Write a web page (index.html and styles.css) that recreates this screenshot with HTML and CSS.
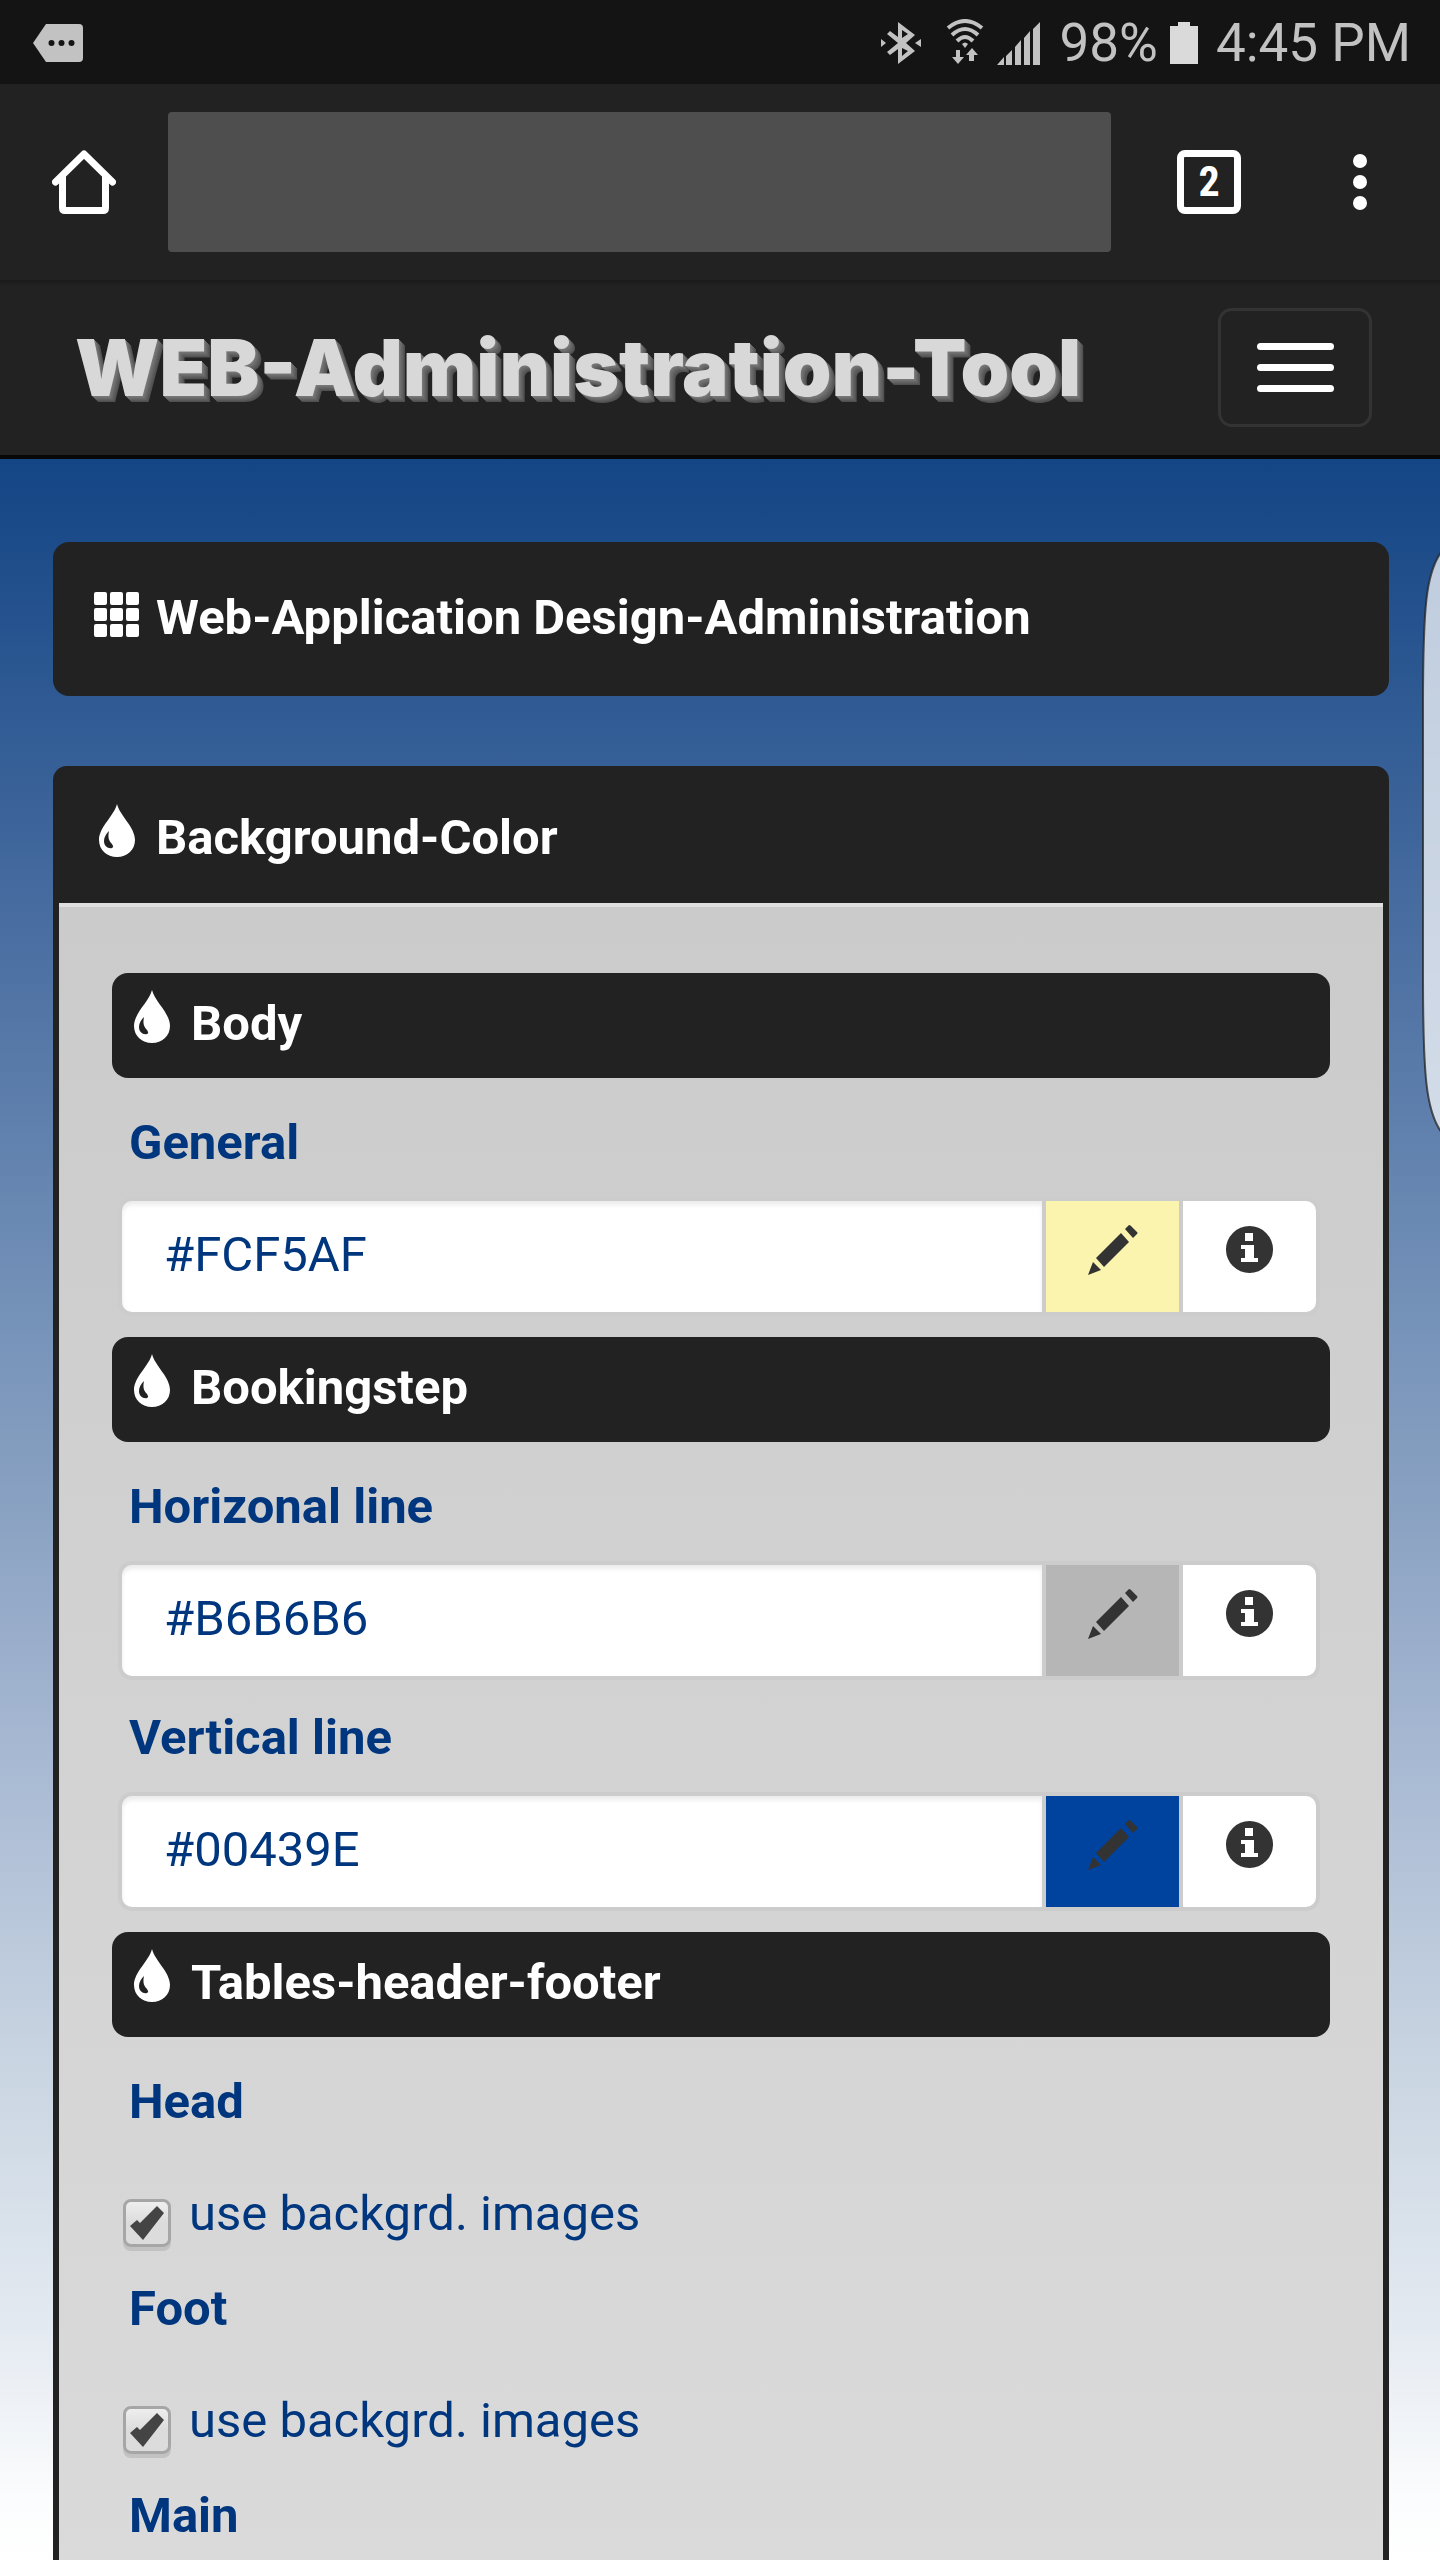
FILE: index.html
```html
<!DOCTYPE html>
<html lang="en">
<head>
<meta charset="utf-8">
<meta name="viewport" content="width=device-width, initial-scale=1">
<title>WEB-Administration-Tool</title>
<link rel="stylesheet" href="styles.css">
</head>
<body>
<svg class="sprite" aria-hidden="true">
  <symbol id="drop" viewBox="0 0 36 53"><path fill-rule="evenodd" d="M18 0C21 12 36 23 36 36C36 46 28 53 18 53C8 53 0 46 0 36C0 23 15 12 18 0ZM10 27C7 30 5 33 5 37C5 42 9 45 13 44C15 43 14 42 13 40C9 36 9 32 10 27Z"/></symbol>
  <symbol id="pencil" viewBox="0 0 50 50"><path d="M0 50L5 37L13 45ZM8 33L33 8L41 17L16 42ZM37 4L41 0Q42 0 43 1L49 7Q50 8 49 9L45 13Z"/></symbol>
  <symbol id="info" viewBox="0 0 47 47"><path fill-rule="evenodd" d="M23.500 0A23.500 23.500 0 1 1 23.500 47A23.500 23.500 0 1 1 23.500 0ZM19 7V15H27V7ZM15 19V23H19V32H15V36H32V32H28V19Z"/></symbol>
</svg>

<header class="status">
  <svg class="notice" width="50" height="38" viewBox="0 0 50 38"><path fill="#c2c2c2" d="M13 0H46Q50 0 50 4V34Q50 38 46 38H13L0 19Z"/><g fill="#141414"><circle cx="18.500" cy="19" r="3"/><circle cx="28.500" cy="19" r="3"/><circle cx="38.500" cy="19" r="3"/></g></svg>
  <svg class="bt" width="40" height="42" viewBox="0 0 40 42" fill="#c2c2c2"><path fill-rule="evenodd" d="M17 0L34 13L25 21L34 29L17 42V27L9 33L6 30L17 21L6 12L9 9L17 15ZM21 8V16L27 12ZM21 26V34L27 29ZM0 17L5 21L0 25ZM40 17L34 21L40 25Z"/></svg>
  <svg class="wifi" width="38" height="45" viewBox="0 0 38 45"><g fill="none" stroke="#c2c2c2" stroke-width="4"><path d="M2 9Q19 -5 36 9"/><path d="M6 16Q19 4 32 16"/><path d="M11 22Q19 14 27 22"/></g><path fill="#c2c2c2" d="M16 25Q19 22 22 25L19 29ZM10 31H14V38H18L12 45L6 38H10ZM26 29L32 36H28V42H23V36H20Z"/></svg>
  <svg class="signal" width="43" height="43" viewBox="0 0 43 43" fill="#c2c2c2"><path d="M0 43L7 35V43ZM9 43V34L15 28V43ZM18 43V25L24 18V43ZM27 43V16L33 9V43ZM36 43V7L43 0V43Z"/></svg>
  <span class="percent">98%</span>
  <svg class="battery" width="28" height="42" viewBox="0 0 28 42"><path fill="#dadada" d="M8 0H20V4H28V42H0V4H8Z"/></svg>
  <time class="clock">4:45 PM</time>
</header>

<div class="browser">
  <button class="tool home" aria-label="Home"><svg width="64" height="64" viewBox="0 0 64 64" fill="none" stroke="#fff" stroke-width="7" stroke-linecap="round"><path d="M3.500 32L32 4L60.500 32" stroke-linejoin="round"/><path d="M10.500 27V58Q10.500 60.500 13 60.500H51Q53.500 60.500 53.500 58V27"/></svg></button>
  <input class="address" type="text" aria-label="Address">
  <button class="tool tabs" aria-label="Open tabs">2</button>
  <button class="tool more" aria-label="More"><svg width="14" height="56" viewBox="0 0 14 56" fill="#fff"><circle cx="7" cy="7" r="7"/><circle cx="7" cy="28" r="7"/><circle cx="7" cy="49" r="7"/></svg></button>
</div>

<nav class="navbar">
  <a class="brand" href="#">WEB-Administration-Tool</a>
  <button class="toggle" aria-label="Menu"><span></span><span></span><span></span></button>
</nav>

<main class="page">
  <h1 class="title bar"><svg class="grid" width="45" height="45" viewBox="0 0 45 45" fill="#fff"><g id="r"><rect width="13" height="13" rx="2"/><rect x="16" width="13" height="13" rx="2"/><rect x="32" width="13" height="13" rx="2"/></g><use href="#r" y="16"/><use href="#r" y="32"/></svg>Web-Application Design-Administration</h1>

  <section class="panel">
    <h2 class="heading bar"><svg class="drop"><use href="#drop"/></svg>Background-Color</h2>
    <div class="content">
      <h3 class="sub bar"><svg class="drop"><use href="#drop"/></svg>Body</h3>
      <div class="field">
        <label for="general">General</label>
        <div class="group">
          <input id="general" type="text" value="#FCF5AF">
          <button class="pick yellow" aria-label="Pick colour"><svg width="50" height="50"><use href="#pencil"/></svg></button>
          <button class="pick last" aria-label="Info"><svg width="47" height="47"><use href="#info"/></svg></button>
        </div>
      </div>

      <h3 class="sub bar"><svg class="drop"><use href="#drop"/></svg>Bookingstep</h3>
      <div class="field">
        <label for="horizontal">Horizonal line</label>
        <div class="group">
          <input id="horizontal" type="text" value="#B6B6B6">
          <button class="pick grey" aria-label="Pick colour"><svg width="50" height="50"><use href="#pencil"/></svg></button>
          <button class="pick last" aria-label="Info"><svg width="47" height="47"><use href="#info"/></svg></button>
        </div>
      </div>
      <div class="field">
        <label for="vertical">Vertical line</label>
        <div class="group">
          <input id="vertical" type="text" value="#00439E">
          <button class="pick blue" aria-label="Pick colour"><svg width="50" height="50"><use href="#pencil"/></svg></button>
          <button class="pick last" aria-label="Info"><svg width="47" height="47"><use href="#info"/></svg></button>
        </div>
      </div>

      <h3 class="sub bar"><svg class="drop"><use href="#drop"/></svg>Tables-header-footer</h3>
      <div class="option">
        <h4>Head</h4>
        <label class="check"><input type="checkbox" checked>use backgrd. images</label>
      </div>
      <div class="option">
        <h4>Foot</h4>
        <label class="check"><input type="checkbox" checked>use backgrd. images</label>
      </div>
      <div class="option">
        <h4>Main</h4>
      </div>
    </div>
  </section>
</main>

<svg class="edge" width="18" height="592" viewBox="0 0 18 592" aria-hidden="true"><path d="M20 5C4 26 1 60 1 160V430C1 530 4 566 20 587Z" fill="#fff" fill-opacity=".72" stroke="#222" stroke-opacity=".75" stroke-width="2"/></svg>
</body>
</html>
```
FILE: styles.css
```css
* { box-sizing: border-box; }

body {
  margin: 0;
  min-height: 100vh;
  display: flex;
  flex-direction: column;
  position: relative;
  overflow-x: hidden;
  background: #222;
  font-family: Roboto, "Liberation Sans", sans-serif;
  font-size: 49px;
  line-height: 56px;
}

button, input { font: inherit; margin: 0; }
button { padding: 0; border: 0; background: none; }
h1, h2, h3, h4 { margin: 0; font-size: 49px; font-weight: 700; }
svg { flex: none; }
.sprite { position: absolute; width: 0; height: 0; }

/* Phone status bar */
.status {
  display: flex;
  align-items: center;
  height: 84px;
  padding: 2px 29px 0 33px;
  background: #141414;
  color: #c2c2c2;
  font-size: 53px;
}
.bt { margin-left: auto; margin-right: 25px; }
.wifi { margin-right: 13px; margin-bottom: 3px; }
.signal { margin-right: 20px; }
.battery { margin: 0 18px 0 12px; }

/* Browser toolbar */
.browser {
  display: flex;
  align-items: center;
  height: 196px;
  padding: 0 73px 0 52px;
}
.tool { flex: none; display: flex; align-items: center; justify-content: center; color: #fff; }
.address {
  flex: 1;
  min-width: 0;
  height: 140px;
  margin: 0 66px 0 52px;
  border: 0;
  border-radius: 4px;
  background: #4e4e4e;
}
.tabs {
  width: 64px;
  height: 64px;
  margin-right: 112px;
  border: 7px solid #fff;
  border-radius: 8px;
  font-family: "Roboto Condensed", Roboto, sans-serif;
  font-size: 42px;
  font-weight: 700;
}

/* Site navigation */
.navbar {
  display: flex;
  align-items: center;
  justify-content: space-between;
  height: 179px;
  padding: 0 68px 0 75px;
  border-bottom: 4px solid #080808;
  background: linear-gradient(#1a1a1a, #222 6px);
}
.brand {
  color: #d8d8d8;
  font-family: Inter, "Liberation Sans", sans-serif;
  font-size: 78px;
  font-weight: 900;
  text-decoration: none;
  white-space: nowrap;
  text-shadow: 1px 1px #777, 2px 2px #707070, 3px 3px #686868, 4px 4px #606060, 5px 5px #585858, 6px 6px #505050;
}
.toggle {
  display: flex;
  flex-direction: column;
  align-items: center;
  justify-content: center;
  gap: 14px;
  width: 154px;
  height: 119px;
  border: 3px solid #333;
  border-radius: 14px;
}
.toggle span { width: 77px; height: 7px; border-radius: 4px; background: #fff; }

/* Page */
.page {
  flex: 1;
  display: flex;
  flex-direction: column;
  gap: 70px;
  padding: 83px 51px 0 53px;
  background: linear-gradient(#144585 0, #1a4a88 3%, #4b6fa2 23%, #7a96bb 43%, #8aa2c2 50%, #a8b9d3 62%, #c8d4e1 76%, #e4eaf1 89%, #fbfcfd 97%, #fff);
}
.bar {
  display: flex;
  align-items: center;
  gap: 15px;
  background: #222;
  color: #fff;
}
.title { padding: 48px 40px 50px; border-radius: 16px; }
.grid { margin: 0 2px 7px 1px; }
.drop { width: 36px; height: 53px; margin: 0 6px 14px; fill: #fff; }

.panel {
  flex: 1;
  display: flex;
  flex-direction: column;
  border: solid #222;
  border-width: 0 6px;
  border-radius: 14px 14px 0 0;
  background: #222;
}
.heading { padding: 38px 34px 32px; border-radius: 14px 14px 0 0; }
.content {
  flex: 1;
  padding: 66px 53px 17px;
  border-top: 4px solid #dfdfdf;
  background: linear-gradient(#cbcbcb, #dadada);
}
.sub { padding: 17px 16px 21px; border-radius: 16px; margin-bottom: 37px; }

.field { margin: 0 10px 21px 6px; color: #00367e; }
.field > label { display: block; margin: 0 11px 26px; font-weight: 700; }
.field + .field { margin-top: 30px; }
.field:has(+ .field) { margin-bottom: 0; }

.group { display: flex; height: 119px; }
.group input {
  flex: 1;
  min-width: 0;
  padding: 0 42px 3px;
  border: 4px solid #ccc;
  border-radius: 14px 0 0 14px;
  background: #fff;
  box-shadow: inset 0 4px 4px #ececec;
  color: #00367e;
}
.pick {
  flex: none;
  display: flex;
  align-items: center;
  justify-content: center;
  width: 137px;
  padding-bottom: 14px;
  border: solid #ccc;
  border-width: 4px 4px 4px 0;
  background: #fff;
  fill: #333;
}
.last { border-radius: 0 14px 14px 0; }
.yellow { background: #fbf4ae; }
.grey { background: #b6b6b6; }
.blue { background: #00439e; }

.option { margin-bottom: 34px; color: #00367e; }
.option:last-child { margin-bottom: 0; }
.option h4 { margin-left: 17px; }
.check { display: flex; gap: 18px; margin: 56px 0 0 11px; }
.check input {
  flex: none;
  appearance: none;
  width: 48px;
  height: 48px;
  margin-top: 13px;
  border: 3px solid #a6a6a6;
  border-radius: 8px;
  background: linear-gradient(#eee, #dcdcdc 50%);
  box-shadow: 0 4px #c2c2c2;
}
.check input:checked::before {
  content: "";
  display: block;
  width: 42px;
  height: 42px;
  background: #444;
  clip-path: polygon(4px 24px, 11px 18px, 14px 21px, 31px 4px, 38px 11px, 17px 38px);
}

/* Edge panel handle, floating over the page */
.edge { position: absolute; right: 0; top: 546px; }
```
